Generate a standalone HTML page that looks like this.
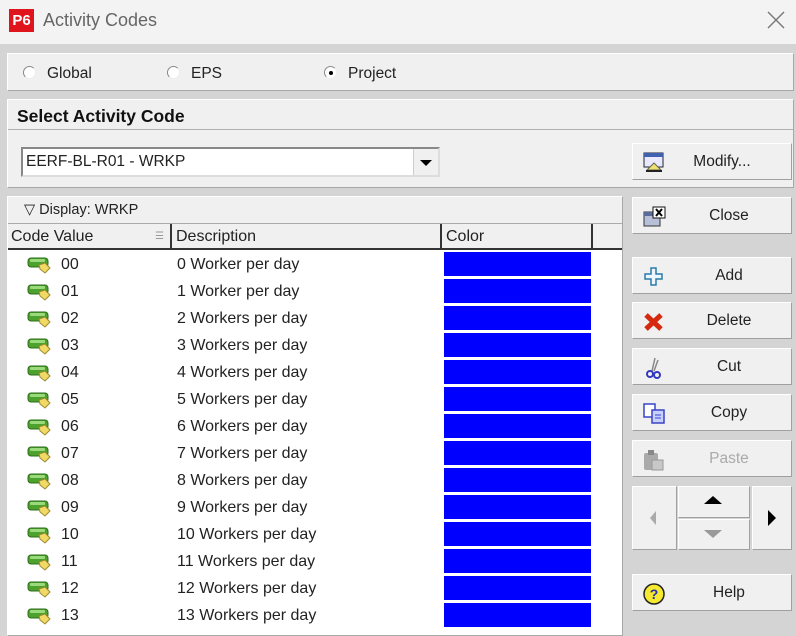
<!DOCTYPE html>
<html><head><meta charset="utf-8"><style>
*{margin:0;padding:0;box-sizing:border-box}
body{width:796px;height:621px;overflow:hidden;background:#d4d4d4;font-family:"Liberation Sans",Arial,sans-serif;font-size:15.5px;color:#222;position:relative}
.a{position:absolute}
.title{left:0;top:0;width:796px;height:44px;background:#f3f3f3}
.panel{background:#f0f0f0;border:1px solid #fff;border-right-color:#a8a8a8;border-bottom-color:#a8a8a8}
.btn{position:absolute;left:632px;width:160px;height:37px;background:#f0f0f0;border:1px solid #fff;border-right-color:#a0a0a0;border-bottom-color:#a0a0a0;font-size:15.5px}
.btn span{position:absolute;left:0;right:0;padding-left:34px;text-align:center;top:9px}
.btn svg{position:absolute;left:10px;top:8px}
.row{position:absolute;left:9px;width:612px;height:27px;font-size:16px}
.row .cv{position:absolute;left:52px;top:5px}
.row .ds{position:absolute;left:168px;top:5px}
.row .cb{position:absolute;left:435px;top:1px;width:147px;height:24px;background:#0000ff}
.row svg{position:absolute;left:18px;top:5px}
.radio{position:absolute;width:13px;height:13px;border-radius:50%;border:1px solid #888;border-right-color:#eee;border-bottom-color:#eee;background:#fff}
</style></head><body>
<div class="a title"></div>
<div class="a" style="left:9px;top:9px;width:25px;height:23px;background:#e0141c;color:#fff;font-size:15px;font-weight:bold;text-align:center;line-height:23px">P6</div>
<div class="a" style="left:43px;top:10px;font-size:18px;color:#666">Activity Codes</div>
<svg class="a" style="left:767px;top:11px" width="18" height="18"><path d="M1 1L17 17M17 1L1 17" stroke="#777" stroke-width="1.4"/></svg>

<div class="a panel" style="left:7px;top:53px;width:787px;height:38px"></div>
<div class="radio" style="left:23px;top:66px"></div><div class="a" style="left:47px;top:65px">Global</div>
<div class="radio" style="left:167px;top:66px"></div><div class="a" style="left:191px;top:65px">EPS</div>
<div class="radio" style="left:324px;top:66px"></div><div class="a" style="left:329px;top:71px;width:4px;height:4px;border-radius:50%;background:#000"></div><div class="a" style="left:348px;top:65px">Project</div>

<div class="a panel" style="left:7px;top:99px;width:787px;height:89px"></div>
<div class="a" style="left:17px;top:106px;font-weight:bold;font-size:17.5px;color:#111">Select Activity Code</div>
<div class="a" style="left:8px;top:129px;width:785px;height:1px;background:#b0b0b0"></div>
<div class="a" style="left:21px;top:147px;width:419px;height:30px;background:#fff;border:2px solid #888;border-right-color:#ddd;border-bottom-color:#ddd"></div>
<div class="a" style="left:26px;top:153px;font-size:15.5px">EERF-BL-R01 - WRKP</div>
<div class="a" style="left:413px;top:149px;width:25px;height:26px;background:#f0f0f0;border-left:1px solid #ccc"></div>
<div class="a" style="left:420px;top:160px;border-left:6px solid transparent;border-right:6px solid transparent;border-top:6px solid #000"></div>

<div class="btn" style="top:143px"><svg width="22" height="22"><rect x="1" y="1" width="19" height="14" fill="#e8e8ff" stroke="#223"/><rect x="1" y="1" width="19" height="4" fill="#4060b0"/><path d="M4 18L11 11L18 18Z" fill="#f0e070" stroke="#665"/><rect x="3" y="18" width="16" height="2" fill="#222"/></svg><span style="padding-left:20px">Modify...</span></div>

<div class="a panel" style="left:7px;top:196px;width:616px;height:440px;background:#fff"></div>
<div class="a" style="left:8px;top:197px;width:614px;height:27px;background:#f0f0f0;border-bottom:1px solid #aaa"></div>
<div class="a" style="left:24px;top:202px;font-size:14.5px">▽ Display: WRKP</div>
<div class="a" style="left:8px;top:224px;width:614px;height:26px;background:#f0f0f0;border-bottom:2px solid #333"></div>
<div class="a" style="left:11px;top:228px;font-size:16px">Code Value</div>
<div class="a" style="left:155px;top:231px;font-size:10px;color:#999">☰</div>
<div class="a" style="left:170px;top:224px;width:2px;height:25px;background:#333"></div>
<div class="a" style="left:176px;top:228px;font-size:16px">Description</div>
<div class="a" style="left:440px;top:224px;width:2px;height:25px;background:#333"></div>
<div class="a" style="left:446px;top:228px;font-size:16px">Color</div>
<div class="a" style="left:591px;top:224px;width:2px;height:25px;background:#333"></div>

<div id="rows"></div>
<script>
var d=["0 Worker per day","1 Worker per day"];for(var i=2;i<14;i++)d.push(i+" Workers per day");
var h="";for(var i=0;i<14;i++){var c=(i<10?"0":"")+i;
h+='<div class="row" style="top:'+(251+27*i)+'px"><svg width="28" height="18"><rect x="1" y="2" width="20" height="9" rx="3" fill="#4ca22c" stroke="#2d6e17"/><rect x="3" y="3" width="15" height="3" rx="1" fill="#9ad97c"/><path d="M12 9L18 7L23 12L18 17L13 13Z" fill="#f2d966" stroke="#9a8a30"/></svg><div class="cv">'+c+'</div><div class="ds">'+d[i]+'</div><div class="cb"></div></div>';}
document.getElementById("rows").innerHTML=h;
</script>

<div class="btn" style="top:197px"><svg width="24" height="22"><rect x="1" y="6" width="16" height="14" fill="#b8bfd8" stroke="#333"/><rect x="1" y="6" width="16" height="4" fill="#5a6a9a"/><rect x="10" y="1" width="12" height="11" fill="#fff" stroke="#111"/><path d="M13 3L19 10M19 3L13 10" stroke="#000" stroke-width="2"/></svg><span>Close</span></div>
<div class="btn" style="top:257px"><svg width="22" height="22"><path d="M8 2H13V8H19V13H13V19H8V13H2V8H8Z" fill="#eef6ff" stroke="#2a7aa8" stroke-width="1.5"/></svg><span>Add</span></div>
<div class="btn" style="top:302px"><svg width="22" height="22"><path d="M3 4L18 18M18 4L3 18" stroke="#d52a10" stroke-width="5"/></svg><span>Delete</span></div>
<div class="btn" style="top:348px"><svg width="22" height="24"><path d="M9 14L12 1M11 14L15 3" stroke="#888" stroke-width="1.5"/><circle cx="7" cy="17" r="3" fill="none" stroke="#3338c0" stroke-width="2"/><circle cx="14" cy="18" r="3" fill="none" stroke="#3338c0" stroke-width="2"/></svg><span>Cut</span></div>
<div class="btn" style="top:394px"><svg width="24" height="22"><rect x="1" y="1" width="11" height="13" fill="#fff" stroke="#3a44c8" stroke-width="1.5"/><rect x="9" y="7" width="12" height="13" fill="#c8d0ff" stroke="#3a44c8" stroke-width="1.5"/><path d="M12 12H18M12 15H18" stroke="#3a44c8"/></svg><span>Copy</span></div>
<div class="btn" style="top:440px;color:#aaa"><svg width="24" height="22"><rect x="1" y="4" width="14" height="17" rx="2" fill="#aaa"/><rect x="5" y="1" width="6" height="5" fill="#888"/><rect x="9" y="11" width="11" height="10" fill="#c8c8c8" stroke="#999"/></svg><span>Paste</span></div>

<div class="a" style="left:632px;top:486px;width:45px;height:64px;background:#f0f0f0;border:1px solid #fff;border-right-color:#a0a0a0;border-bottom-color:#a0a0a0"></div>
<div class="a" style="left:650px;top:511px;border-top:7px solid transparent;border-bottom:7px solid transparent;border-right:6px solid #aaa"></div>
<div class="a" style="left:678px;top:486px;width:72px;height:32px;background:#f0f0f0;border:1px solid #fff;border-right-color:#a0a0a0;border-bottom-color:#a0a0a0"></div>
<div class="a" style="left:704px;top:496px;border-left:9px solid transparent;border-right:9px solid transparent;border-bottom:8px solid #000"></div>
<div class="a" style="left:678px;top:519px;width:72px;height:31px;background:#f0f0f0;border:1px solid #fff;border-right-color:#a0a0a0;border-bottom-color:#a0a0a0"></div>
<div class="a" style="left:704px;top:530px;border-left:9px solid transparent;border-right:9px solid transparent;border-top:8px solid #999"></div>
<div class="a" style="left:752px;top:486px;width:40px;height:64px;background:#f0f0f0;border:1px solid #fff;border-right-color:#a0a0a0;border-bottom-color:#a0a0a0"></div>
<div class="a" style="left:768px;top:510px;border-top:8px solid transparent;border-bottom:8px solid transparent;border-left:8px solid #000"></div>

<div class="btn" style="top:574px"><svg width="24" height="22"><circle cx="11" cy="11" r="10" fill="#f5ea30" stroke="#222" stroke-width="1.5"/><text x="11" y="16" text-anchor="middle" font-size="14" font-weight="bold" fill="#2030b0" font-family="Liberation Sans">?</text></svg><span>Help</span></div>
</body></html>
